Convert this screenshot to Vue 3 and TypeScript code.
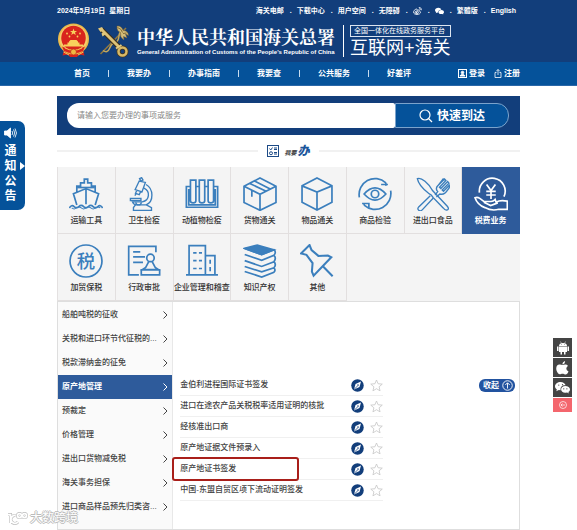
<script setup lang="ts">
import { ref } from 'vue'

interface Service {
  name: string
  icon: string
}

const mainNav: string[] = ['首页', '我要办', '办事指南', '我要查', '公共服务', '好差评']

const services: Service[] = [
  { name: '运输工具', icon: 'ship' },
  { name: '卫生检疫', icon: 'microscope' },
  { name: '动植物检疫', icon: 'tubes' },
  { name: '货物通关', icon: 'box' },
  { name: '物品通关', icon: 'cube' },
  { name: '商品检验', icon: 'eye' },
  { name: '进出口食品', icon: 'food' },
  { name: '税费业务', icon: 'tax' },
  { name: '加贸保税', icon: 'bond' },
  { name: '行政审批', icon: 'stamp' },
  { name: '企业管理和稽查', icon: 'building' },
  { name: '知识产权', icon: 'books' },
  { name: '其他', icon: 'pin' },
]

const categories: string[] = [
  '船舶吨税的征收',
  '关税和进口环节代征税的...',
  '税款滞纳金的征免',
  '原产地管理',
  '预裁定',
  '价格管理',
  '进出口货物减免税',
  '海关事务担保',
  '进口商品样品预先归类咨...',
]

const items: string[] = [
  '金伯利进程国际证书签发',
  '进口在途农产品关税税率适用证明的核批',
  '经核准出口商',
  '原产地证据文件预录入',
  '原产地证书签发',
  '中国-东盟自贸区项下流动证明签发',
]

const activeService = ref('税费业务')
const activeCategory = ref('原产地管理')
const marked = '原产地证书签发'
const keyword = ref('')
</script>

<template>
  <div class="page">
    <header>
      <div class="top">
        <div class="utility">
          <span class="date">2024年5月19日&nbsp; 星期日</span>
          <nav class="links">
            <a href="#">海关电邮</a><i>.</i>
            <a href="#">下载中心</a><i>.</i>
            <a href="#">用户空间</a><i>.</i>
            <a href="#">无障碍</a><i>.</i>
            <a href="#" aria-label="微博">
              <svg width="9" height="8" viewBox="0 0 18 16" fill="none" stroke="#fff" stroke-width="1.6">
                <path d="M7 4C3 5 1 8 1 10.500C1 13 4 15 8 15S15 13 15 10.500C15 9 14 8.500 12.500 8C13 6 11 5.500 8 6.500C8.500 5 8 4 7 4Z" />
                <ellipse cx="7.500" cy="10.800" rx="3.600" ry="2.600" />
                <circle cx="7" cy="11" r="1" fill="#fff" />
                <path d="M11.500 1C15 .5 17.500 3 16.500 6.500M12 3.500C14 3.300 14.800 4.500 14.300 6" />
              </svg>
            </a><i>.</i>
            <a href="#" aria-label="微信">
              <svg width="9" height="8" viewBox="0 0 24 20" fill="#fff">
                <path d="M9 1C4 1 0 4 0 8C0 10 1 12 3 13L2 16L6 14L9 14.500C8 9 12 6 17 6.500C16 3 13 1 9 1Z" />
                <path d="M16.500 7.500C12.500 7.500 9.800 10 9.800 13S12.500 18.300 16.500 18.300L19.500 18L22 19.500L21.500 17C23 16 24 14.700 24 13C24 10 20.500 7.500 16.500 7.500Z" />
              </svg>
            </a><i>.</i>
            <a href="#">繁體版</a><i>.</i>
            <a href="#">English</a>
          </nav>
        </div>
        <div class="brand">
          <svg class="emblem" viewBox="0 0 66 68">
            <path d="M14 54L11 64L22 62L26 67H40L44 62L55 64L52 54Z" fill="#d8241c" />
            <circle cx="33" cy="31" r="31" fill="#eab94a" />
            <circle cx="33" cy="31" r="28" fill="#f4cc69" />
            <circle cx="33" cy="29" r="24.500" fill="#d9251d" />
            <path d="M33 10L34.800 15H40L36 18L37.500 23L33 20L28.500 23L30 18L26 15H31.200Z" fill="#f8d15c" />
            <g fill="#f8d15c">
              <circle cx="20" cy="20" r="1.800" /><circle cx="46" cy="20" r="1.800" />
              <circle cx="25" cy="26" r="1.800" /><circle cx="41" cy="26" r="1.800" />
              <path d="M24 36L27 33H39L42 36V38H45V42H52V46H14V42H21V38H24Z" />
            </g>
            <path d="M10 46Q33 59 56 46L52 55Q33 64 14 55Z" fill="#d8241c" />
            <path d="M16 49Q33 58 50 49" fill="none" stroke="#f4c657" stroke-width="2" />
            <circle cx="33" cy="57" r="6" fill="#edb842" stroke="#c0281a" stroke-width="1.500" />
            <path d="M13 57L24 63M53 57L42 63" stroke="#f4c657" stroke-width="2" />
          </svg>
          <svg class="keys" viewBox="0 0 66 68" fill="none">
            <path d="M7 61L58 9" stroke="#92783f" stroke-width="3" />
            <path d="M12 54Q21 60 25 50T36 38T44 25T52 13" stroke="#c5a85c" stroke-width="3" />
            <path d="M40 5Q49 4 52 14Q62 14 63 24L57 21L60 29L53 26L54 33Q45 27 47 18Q39 15 40 5Z" fill="#d4bd79" stroke="#725b2e" stroke-width="1" />
            <path d="M41 8Q49 10 51 18M59 19L52 20" stroke="#806b38" stroke-width="2" />
            <path d="M9 12L48 51" stroke="#3c2d17" stroke-width="10" />
            <path d="M9 12L48 51" stroke="#dcc176" stroke-width="6" />
            <path d="M2 10L10 7L13 12L7 17ZM9 20L15 16L18 21L11 26Z" fill="#e2c77b" />
            <circle cx="51" cy="56" r="8" stroke="#47371a" stroke-width="8" />
            <circle cx="51" cy="56" r="8" stroke="#d7b968" stroke-width="5" />
            <path d="M38 50L49 43" stroke="#e3cc82" stroke-width="4" />
          </svg>
          <div class="name">
            <h1>中华人民共和国海关总署</h1>
            <p>General Administration of Customs of the People's Republic of China</p>
          </div>
          <div class="platform">
            <span class="badge">全国一体化在线政务服务平台</span>
            <span class="slogan">互联网+海关</span>
          </div>
        </div>
      </div>
      <div class="bar">
        <nav class="main-nav">
          <a v-for="entry in mainNav" :key="entry" href="#">{{ entry }}</a>
        </nav>
        <div class="account">
          <a href="#">
            <svg width="9" height="9" viewBox="0 0 18 18" fill="none" stroke="#fff" stroke-width="2">
              <rect x="1" y="1" width="16" height="16" /><circle cx="9" cy="7" r="2.500" fill="#fff" />
              <path d="M4 14Q5 11 9 11T14 14Z" fill="#fff" />
            </svg>登录
          </a>
          <a href="#">
            <svg width="8" height="9" viewBox="0 0 16 18" fill="none" stroke="#fff" stroke-width="1.600">
              <path d="M5 7H2V17H14V7H11M8 12V1M4.500 4.500L8 1L11.500 4.500" />
            </svg>注册
          </a>
        </div>
      </div>
    </header>

    <main>
      <form class="search" @submit.prevent>
        <input v-model="keyword" type="text" aria-label="搜索" placeholder="请输入您要办理的事项或服务" />
        <button type="submit">
          <svg width="14" height="14" viewBox="0 0 28 28" fill="none" stroke="#fff" stroke-width="2.400">
            <circle cx="12" cy="12" r="10" /><path d="M19 19L26 26" />
          </svg>快速到达
        </button>
      </form>

      <div class="section-title">
        <svg width="12" height="12" viewBox="0 0 24 24" fill="none" stroke="#1c4a86" stroke-width="2">
          <rect x="1" y="1" width="22" height="22" /><path d="M5 7L7.500 10L11 5M14 6H20M14 9H20M14 15H20M14 18H20" />
          <circle cx="8" cy="16.500" r="3" />
        </svg>
        <h2><small>我要</small><em>办</em></h2>
      </div>

      <div class="services">
        <button
          v-for="service in services"
          :key="service.name"
          type="button"
          :class="{ active: service.name === activeService }"
          @click="activeService = service.name"
        >
          <svg class="icon" viewBox="0 0 100 100" fill="none" stroke="currentColor" stroke-width="5">
            <g v-if="service.icon === 'ship'">
              <path d="M23 82L13 49L50 34L87 49L77 82M23 47V27H34V17H45V6H55V17H66V27H77V47M50 34V80" />
              <path d="M24 31H76" />
              <path d="M1 91Q8 80 15 87T29 87T43 87T57 87T71 87T85 87T99 91" />
              <path d="M8 91Q15 97 22 91T36 91T50 91T64 91T78 91T92 91" stroke-width="3" />
            </g>
            <g v-else-if="service.icon === 'microscope'" stroke-width="4">
              <path d="M37 5L43 2L47 9L41 12ZM36 12L54 16L44 44L24 37ZM29 39L25 48L36 52L40 43M27 49L23 55" />
              <path d="M56 22C78 34 80 73 56 82H27C22 82 18 78 16 73H45C67 69 69 42 50 33" />
              <path d="M10 63H41V69H10ZM25 82L19 90V98H72V90L57 82M26 74A8 8 0 0 0 42 74" />
            </g>
            <g v-else-if="service.icon === 'tubes'">
              <path d="M17 28H4V89H96V28H83M16 9H32V70Q32 76 24 76T16 70ZM42 9H58V70Q58 76 50 76T42 70ZM68 9H84V70Q84 76 76 76T68 70ZM32 28H42M58 28H68M11 35V82H89V35" />
            </g>
            <g v-else-if="service.icon === 'box'">
              <path d="M50 3L97 27V75L50 98L3 75V27ZM3 27L50 51L97 27M50 51V98M20 19L68 42M34 12L80 35M26 40V58" />
            </g>
            <g v-else-if="service.icon === 'cube'">
              <path d="M50 3L94 26V74L50 97L6 74V26ZM6 26L50 44L94 26M50 44V97" />
            </g>
            <g v-else-if="service.icon === 'eye'">
              <path d="M4 60A47 47 0 0 1 82 17M96 40A47 47 0 0 1 18 83M68 22H88M12 78H32V89" />
              <path d="M18 50Q50 14 82 50Q50 86 18 50Z" /><circle cx="50" cy="50" r="11" />
              <path d="M82 17V26M18 83V77" />
            </g>
            <g v-else-if="service.icon === 'food'" stroke-width="4">
              <path d="M4 5C15 -1 38 20 48 39L92 86Q99 95 91 97Q86 99 80 91L50 60Q46 51 37 48Q8 26 4 5Z" />
              <path d="M42 55L8 88Q3 94 8 98T19 96L51 62M56 53L64 43Q56 34 64 26L84 6L88 10L69 30L73 34L93 13L97 18L77 38L81 42L98 24Q101 30 93 38Q84 54 70 50L60 59M64 26L81 4" />
            </g>
            <g v-else-if="service.icon === 'tax'">
              <path d="M16 46A38 38 0 1 1 88 58M37 22L50 40L63 22M36 42H64M36 53H64M50 40V65" />
              <path d="M3 61Q10 58 17 63L29 72H50Q57 72 62 66L65 74Q76 67 98 71V95H73Q52 101 32 90Q10 82 3 61ZM29 74L49 84L70 76" />
            </g>
            <g v-else-if="service.icon === 'bond'">
              <circle cx="50" cy="50" r="47" /><text x="50" y="70" text-anchor="middle">税</text>
            </g>
            <g v-else-if="service.icon === 'stamp'">
              <path d="M35 91H5V7H85V24M18 23H39M18 38H53M18 54H47" /><circle cx="69" cy="41" r="11" />
              <path d="M64 52L55 69L46 75H92L83 69L74 52M42 76H96V91H42Z" />
            </g>
            <g v-else-if="service.icon === 'building'">
              <path d="M12 91V5H60V91M60 34H88V91M3 91H97" />
              <path d="M24 26H34M41 26H50M24 49H34M41 49H50M24 72H34M41 72H50M74 46V58M74 68V80" />
            </g>
            <g v-else-if="service.icon === 'books'">
              <path d="M5 13L42 3L91 17L55 31Z" fill="currentColor" />
              <path d="M5 13L55 31L91 17Q99 23 91 33L55 48L5 31M91 33Q99 42 91 52L55 66L5 49M91 52Q99 61 91 70L55 82L5 66M91 70Q97 77 91 83L55 97L5 81" />
            </g>
            <g v-else>
              <path d="M3 28L28 3L34 18L54 35L82 34L92 39L40 93L35 81L37 56L19 32ZM68 66L96 95" stroke-width="6" />
            </g>
          </svg>
          <span>{{ service.name }}</span>
        </button>
      </div>

      <section class="panel">
        <ul class="categories">
          <li v-for="category in categories" :key="category">
            <button type="button" :class="{ active: category === activeCategory }" @click="activeCategory = category">
              <span>{{ category }}</span>
              <svg width="5" height="8" viewBox="0 0 5 8" fill="none" stroke="currentColor"><path d="M.5 .5L4 4L.5 7.500" /></svg>
            </button>
          </li>
        </ul>
        <ul class="items">
          <li v-for="item in items" :key="item" :class="{ marked: item === marked }">
            <a href="#">{{ item }}</a>
            <button type="button" aria-label="指南">
              <svg width="13" height="13" viewBox="0 0 26 26">
                <circle cx="13" cy="13" r="12.500" fill="#123e7b" />
                <path d="M20 5L17 16L6 21L9 10Z" fill="#fff" /><path d="M6 21L14 13" stroke="#123e7b" stroke-width="1.500" />
                <circle cx="14" cy="12" r="1.500" fill="#123e7b" />
              </svg>
            </button>
            <button type="button" aria-label="收藏">
              <svg width="13" height="13" viewBox="0 0 26 26" fill="#fff" stroke="#c9c9c9" stroke-width="1.700">
                <path d="M13 2L16.200 9.500L24.500 10.200L18.200 15.600L20.100 23.700L13 19.400L5.900 23.700L7.800 15.600L1.500 10.200L9.800 9.500Z" />
              </svg>
            </button>
          </li>
        </ul>
        <button type="button" class="fold">
          收起
          <svg width="11" height="11" viewBox="0 0 22 22" fill="none" stroke="#fff" stroke-width="1.800">
            <circle cx="11" cy="11" r="9.500" /><path d="M11 17V6M6.500 10L11 5.500L15.500 10" />
          </svg>
        </button>
      </section>
    </main>

    <button type="button" class="notice">
      <svg width="13" height="12" viewBox="0 0 26 24" fill="none" stroke="#fff" stroke-width="1.700">
        <path d="M1 8H6L13 2V22L6 16H1Z" fill="#fff" /><path d="M16 8Q19 12 16 16M19 5Q24 12 19 19M22 3Q28 12 22 21" />
      </svg>
      <span>通知公告</span>
      <svg class="arrow" width="5" height="8" viewBox="0 0 5 8" fill="#fff"><path d="M0 0L5 4L0 8Z" /></svg>
    </button>

    <aside class="apps">
      <a href="#" aria-label="Android">
        <svg width="14" height="14" viewBox="0 0 28 28" fill="#fff">
          <path d="M6 10Q6 4 14 4T22 10ZM6 11H22V22H6ZM2 11H5V20H2ZM23 11H26V20H23ZM9 21H12V27H9ZM16 21H19V27H16Z" />
          <path d="M9 1L11 5M19 1L17 5" stroke="#fff" /><path d="M10 7H11M17 7H18" stroke="#444" stroke-width="1.500" />
        </svg>
      </a>
      <a href="#" aria-label="iOS">
        <svg width="13" height="14" viewBox="0 0 26 28" fill="#fff">
          <path d="M13 8C16 7 21 5 24 10C19 13 20 19 25 21C23 26 20 29 16 26C14 25 12 25 10 26C6 28 3 24 1 19C-1 11 3 6 8 7ZM13 7Q12 2 18 0Q19 5 13 7Z" />
        </svg>
      </a>
      <a href="#" aria-label="微信">
        <svg width="15" height="13" viewBox="0 0 24 20" fill="#fff">
          <path d="M9 1C4 1 0 4 0 8C0 10 1 12 3 13L2 16L6 14L9 14.500C8 9 12 6 17 6.500C16 3 13 1 9 1Z" />
          <path d="M16.500 7.500C12.500 7.500 9.800 10 9.800 13S12.500 18.300 16.500 18.300L19.500 18L22 19.500L21.500 17C23 16 24 14.700 24 13C24 10 20.500 7.500 16.500 7.500Z" />
          <g fill="#444"><circle cx="6" cy="6" r="1" /><circle cx="12" cy="5.500" r="1" /><circle cx="14" cy="12" r="1" /><circle cx="19" cy="12" r="1" /></g>
        </svg>
      </a>
      <button type="button" aria-label="收起工具栏">
        <svg width="8" height="8" viewBox="0 0 16 16" fill="none" stroke="#fff" stroke-width="1.400">
          <circle cx="8" cy="8" r="7" /><path d="M12 8H4M7 5L4 8L7 11" />
        </svg>
      </button>
    </aside>

    <div class="watermark">
      <svg width="21" height="13" viewBox="0 0 42 26" fill="none">
        <g stroke="#bdbdbd" stroke-width="6"><path d="M2 5H7V22M17 7A8 8 0 1 0 22 20" /><circle cx="25" cy="7" r="4" /><circle cx="35" cy="7" r="4" /></g>
        <g stroke="#fff" stroke-width="3.500"><path d="M2 5H7V22M17 7A8 8 0 1 0 22 20" /><circle cx="25" cy="7" r="4" /><circle cx="35" cy="7" r="4" /></g>
      </svg>
      <span>大数跨境</span>
    </div>
  </div>
</template>

<style>
body {
  margin: 0;
  background: #fff;
}
</style>

<style scoped>
.page {
  position: relative;
  min-height: 100vh;
  overflow: hidden;
  font: 8px/12px "Liberation Sans", "Noto Sans CJK SC", sans-serif;
  color: #444;
}
.page *,
.page *::before,
.page *::after {
  box-sizing: border-box;
}
a {
  color: inherit;
  text-decoration: none;
}
button {
  margin: 0;
  padding: 0;
  border: 0;
  background: none;
  font: inherit;
  color: inherit;
  cursor: pointer;
}
svg {
  display: block;
  flex: none;
}
ul {
  margin: 0;
  padding: 0;
  list-style: none;
}
h1,
h2,
p {
  margin: 0;
}

.top {
  height: 62px;
  padding: 4px 57px 0;
  background: #123e7b;
  color: #fff;
}
.utility {
  display: flex;
  justify-content: space-between;
  align-items: center;
  height: 14px;
  font-size: 7px;
  font-weight: 700;
  white-space: nowrap;
}
.links {
  display: flex;
  align-items: center;
  gap: 6px;
  padding-right: 4px;
}
.links i {
  width: 1px;
  font-style: normal;
}
.brand {
  display: flex;
  align-items: center;
  margin-top: 5px;
  white-space: nowrap;
}
.emblem {
  width: 33px;
  height: 35px;
}
.keys {
  width: 33px;
  height: 35px;
  margin-left: 7px;
}
.name {
  margin-left: 7px;
  padding-right: 8px;
  border-right: 1px solid #fff;
}
h1 {
  font: 700 18px/22px "Noto Serif CJK SC", "Noto Sans CJK SC", serif;
}
.name p {
  font-size: 6px;
  font-weight: 700;
  line-height: 10px;
}
.platform {
  display: flex;
  flex-direction: column;
  gap: 1px;
  margin-left: 6px;
  padding-top: 2px;
}
.badge {
  padding: 0 3px;
  border: 1px solid #dce5f0;
  font-size: 7px;
  line-height: 10px;
}
.slogan {
  font-size: 18px;
  line-height: 20px;
}
.bar {
  display: flex;
  justify-content: space-between;
  align-items: center;
  height: 24px;
  padding: 0 57px 0 74px;
  border-bottom: 1px solid #2a67a8;
  background: #05529a;
  color: #fff;
  font-weight: 700;
}
.main-nav,
.account,
.account a {
  display: flex;
  align-items: center;
}
.main-nav a + a {
  display: flex;
  align-items: center;
}
.main-nav a + a::before {
  content: "";
  width: 1px;
  height: 7px;
  margin: 0 18px;
  background: #c8dcef;
}
.account {
  gap: 9px;
}
.account a {
  gap: 2px;
}

main {
  padding: 10px 57px 0;
}
.search {
  display: flex;
  padding: 7px 11px 7px 10px;
  background: #123e7b;
}
.search input {
  flex: 1;
  min-width: 0;
  height: 25px;
  padding: 0 10px;
  border: 0;
  border-radius: 12px 2px 2px 12px;
  outline: 0;
  background: #fff;
  font: inherit;
  color: #444;
}
.search input::placeholder {
  color: #888;
  opacity: 1;
}
.search button {
  display: flex;
  align-items: center;
  justify-content: center;
  gap: 4px;
  width: 114px;
  border: 1px solid #7ba3cc;
  border-radius: 0 12px 12px 0;
  background: #05529a;
  color: #fff;
  font-size: 12px;
  font-weight: 700;
}
.section-title {
  display: flex;
  align-items: center;
  gap: 5px;
  height: 32px;
}
.section-title::before,
.section-title::after {
  content: "";
  flex: 1;
  height: 2px;
  margin: 0 4px;
  background: #f1f1f1;
}
.section-title::before {
  margin-left: 0;
}
.section-title::after {
  margin-right: 0;
}
h2 {
  display: flex;
  align-items: center;
  gap: 1px;
  font-size: 12px;
  font-style: italic;
}
h2 small {
  padding-top: 3px;
  font-size: 6px;
}
h2 em {
  color: #1b569b;
  font-weight: 900;
}

.services {
  display: grid;
  grid-template-columns: repeat(8, 1fr);
  border-left: 1px solid #e4e1e1;
  background: #f4f4f4;
}
.services button {
  display: flex;
  flex-direction: column;
  align-items: center;
  gap: 4px;
  height: 67px;
  padding-top: 10px;
  border-right: 1px solid #e2dfdf;
  border-bottom: 1px solid #e2dfdf;
  color: #3b7fbd;
  white-space: nowrap;
}
.services span {
  color: #333;
  font-weight: 500;
}
.services .active {
  border-color: #2e5b9b;
  background: #2e5b9b;
  color: #fff;
}
.services .active span {
  color: #fff;
  font-weight: 700;
}
.icon {
  width: 34px;
  height: 34px;
}
.icon text {
  fill: currentColor;
  stroke: none;
  font-size: 54px;
  font-weight: 500;
}

.panel {
  display: flex;
  min-height: 229px;
  border: 1px solid #dedede;
  font-weight: 500;
}
.categories {
  flex: 0 0 25%;
  padding-top: 1px;
  border-right: 1px solid #e8e8e8;
  background: #fafafa;
}
.categories button {
  display: flex;
  align-items: center;
  justify-content: space-between;
  width: 100%;
  height: 24px;
  padding: 0 4px;
  white-space: nowrap;
}
.categories .active {
  background: #2e5b9b;
  color: #fff;
  font-weight: 700;
}
.items {
  width: 210px;
  padding-top: 73px;
}
.items li {
  display: flex;
  align-items: center;
  gap: 6px;
  position: relative;
  height: 21px;
  margin-left: 7px;
  border-bottom: 1px solid #f0f0f0;
  white-space: nowrap;
}
.items a {
  flex: 1;
}
.marked::after {
  content: "";
  position: absolute;
  top: -2px;
  left: -8px;
  width: 127px;
  height: 24px;
  border: 2px solid #a91f1a;
  border-radius: 3px;
  pointer-events: none;
}
.fold {
  display: flex;
  align-items: center;
  gap: 3px;
  height: 13px;
  margin: 77px 4px 0 auto;
  padding: 0 2px 0 4px;
  border-radius: 6px;
  background: #2253a0;
  color: #fff;
  font-weight: 700;
}

.notice {
  position: absolute;
  top: 121px;
  left: 0;
  display: flex;
  flex-direction: column;
  align-items: center;
  gap: 5px;
  width: 25px;
  padding: 6px 4px 6px 0;
  border-radius: 0 7px 7px 0;
  background: #05529a;
  color: #fff;
  font-size: 12px;
  font-weight: 700;
  line-height: 15px;
}
.notice span {
  width: 12px;
}
.notice .arrow {
  position: absolute;
  top: 41px;
  right: 0;
}
.apps {
  position: absolute;
  top: 338px;
  right: 5px;
  display: flex;
  flex-direction: column;
  gap: 1px;
  width: 19px;
}
.apps a,
.apps button {
  display: flex;
  align-items: center;
  justify-content: center;
  height: 19px;
  background: #444;
}
.apps button {
  height: 14px;
  background: #f4666d;
}
.watermark {
  position: absolute;
  bottom: 5px;
  left: 7px;
  display: flex;
  align-items: center;
  gap: 2px;
  color: #fff;
  font-size: 12px;
  line-height: 14px;
  text-shadow: 1px 0 #bbb, -1px 0 #bbb, 0 1px #bbb, 0 -1px #bbb;
}
</style>
